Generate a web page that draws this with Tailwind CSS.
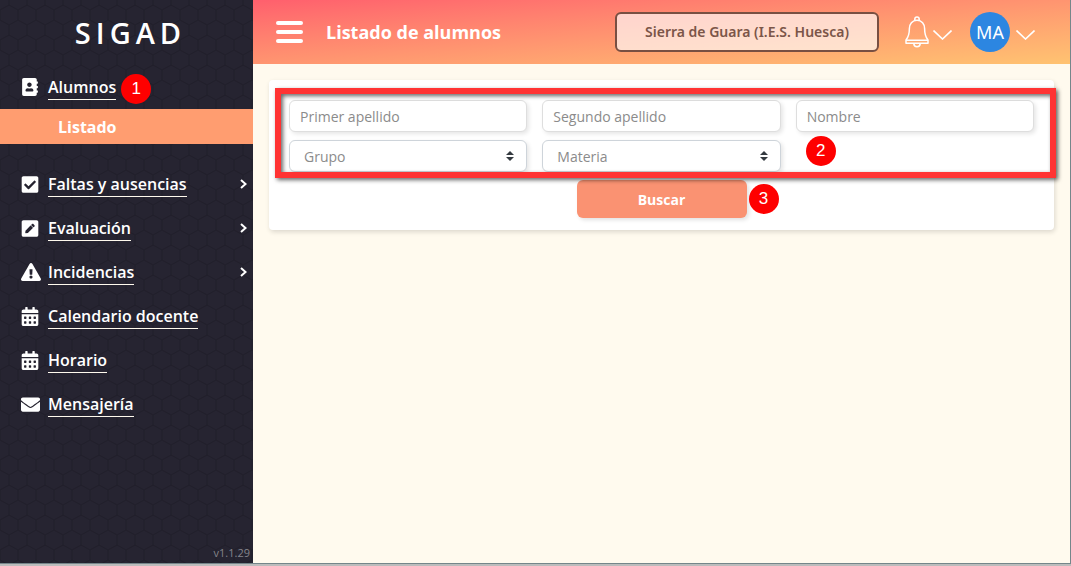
<!DOCTYPE html>
<html lang="es">
<head>
<meta charset="utf-8">
<meta name="viewport" content="width=device-width, initial-scale=1">
<title>SIGAD - Listado de alumnos</title>
<script src="https://cdn.jsdelivr.net/npm/@tailwindcss/browser@4"></script>
</head>
<body class="flex h-screen flex-col overflow-hidden bg-[#bcbcbc] font-['Open_Sans','Noto_Sans',sans-serif]">
<div class="mb-[2px] flex min-h-0 flex-1 border-b border-[#75868a]">

  <aside class="relative isolate flex w-[253px] shrink-0 flex-col bg-[#262431] text-white">
    <svg class="absolute inset-0 -z-10 size-full" aria-hidden="true">
      <defs>
        <pattern id="hex" width="18" height="30" patternUnits="userSpaceOnUse">
          <path d="M9 0v5L0 10v10l9 5v5M9 5l9 5v10l-9 5" fill="none" stroke="#211f2b" stroke-width="1.3"/>
        </pattern>
      </defs>
      <rect width="100%" height="100%" fill="url(#hex)"/>
    </svg>
    <h1 class="flex h-[65px] items-center justify-center pl-2 text-[29px] font-semibold tracking-[5px]">SIGAD</h1>
    <nav class="flex flex-col text-base font-semibold">
      <div class="flex h-11 items-center pl-[21px]">
        <svg class="h-[18px] w-[27px] shrink-0 pr-[9px]" viewBox="0 0 448 512" fill="currentColor" aria-hidden="true"><path d="M436 160c6.600 0 12-5.400 12-12v-40c0-6.600-5.400-12-12-12h-20V48c0-26.500-21.500-48-48-48H48C21.500 0 0 21.500 0 48v416c0 26.500 21.500 48 48 48h320c26.500 0 48-21.500 48-48v-48h20c6.600 0 12-5.400 12-12v-40c0-6.600-5.400-12-12-12h-20v-64h20c6.600 0 12-5.400 12-12v-40c0-6.600-5.400-12-12-12h-20v-64h20zm-228-32c35.300 0 64 28.700 64 64s-28.700 64-64 64-64-28.700-64-64 28.700-64 64-64zm112 236.800c0 10.600-10 19.200-22.400 19.200H118.400C106 384 96 375.400 96 364.800v-19.200c0-31.800 30.100-57.600 67.200-57.600h5c12.300 5.100 25.700 8 39.800 8s27.600-2.900 39.800-8h5c37.100 0 67.200 25.800 67.200 57.600v19.200z"/></svg>
        <a href="#alumnos" class="border-b border-[#fffaee]">Alumnos</a>
        <span class="ml-[5px] mt-1 flex size-[30px] items-center justify-center rounded-full bg-[#fe0000] font-['Liberation_Sans',sans-serif] text-[17px] font-normal">1</span>
      </div>
      <a href="#listado" class="mb-[18px] flex h-[35px] items-center bg-[#ff9d70] pl-[58px] font-bold">Listado</a>
      <div class="flex h-11 items-center pl-[21px] pr-[6px]">
        <svg class="h-[19px] w-[27px] shrink-0 pr-[9px]" viewBox="0 0 448 512" fill="currentColor" aria-hidden="true"><path d="M400 480H48c-26.500 0-48-21.500-48-48V80c0-26.500 21.500-48 48-48h352c26.500 0 48 21.500 48 48v352c0 26.500-21.500 48-48 48zm-204.700-98.100 184-184c6.200-6.200 6.200-16.400 0-22.600l-22.600-22.600c-6.200-6.200-16.400-6.200-22.600 0L184 302.700l-70.100-70.100c-6.200-6.200-16.400-6.200-22.600 0l-22.600 22.600c-6.200 6.200-6.200 16.400 0 22.600l104 104c6.200 6.300 16.400 6.300 22.600.1z"/></svg>
        <a href="#faltas" class="border-b border-[#fffaee]">Faltas y ausencias</a>
        <svg class="ml-auto h-[10px] w-[7px]" viewBox="0 0 7 10" fill="none" stroke="currentColor" stroke-width="2" aria-hidden="true"><path d="M1 1l4.500 4L1 9"/></svg>
      </div>
      <div class="flex h-11 items-center pl-[21px] pr-[6px]">
        <svg class="h-[19px] w-[27px] shrink-0 pr-[9px]" viewBox="0 0 448 512" fill="currentColor" aria-hidden="true"><path d="M400 480H48c-26.500 0-48-21.500-48-48V80c0-26.500 21.500-48 48-48h352c26.500 0 48 21.500 48 48v352c0 26.500-21.500 48-48 48zM238.100 177.900 102.400 313.600l-6.300 57.100c-.8 7.600 5.600 14.100 13.300 13.300l57.100-6.300L302.200 242c2.300-2.300 2.300-6.100 0-8.500L246.700 178c-2.500-2.400-6.300-2.400-8.600-.1zM345 165.100 314.900 135c-9.400-9.400-24.600-9.400-33.900 0l-23.100 23.100c-2.300 2.300-2.300 6.100 0 8.500l55.500 55.500c2.300 2.300 6.100 2.300 8.500 0L345 199c9.300-9.300 9.300-24.500 0-33.900z"/></svg>
        <a href="#evaluacion" class="border-b border-[#fffaee]">Evaluación</a>
        <svg class="ml-auto h-[10px] w-[7px]" viewBox="0 0 7 10" fill="none" stroke="currentColor" stroke-width="2" aria-hidden="true"><path d="M1 1l4.500 4L1 9"/></svg>
      </div>
      <div class="flex h-11 items-center pl-[21px] pr-[6px]">
        <svg class="h-[18px] w-[27px] shrink-0 pr-[7px]" viewBox="0 0 576 512" fill="currentColor" aria-hidden="true"><path d="M569.500 440c18.500 32-4.700 72-41.600 72H48.100c-36.900 0-60-40.100-41.600-72L246.400 24c18.500-32 64.700-32 83.200 0l239.900 416zM288 354c-25.400 0-46 20.600-46 46s20.600 46 46 46 46-20.600 46-46-20.600-46-46-46zm-43.700-165.300 7.400 136c.3 6.400 5.600 11.300 12 11.300h48.500c6.400 0 11.600-5 12-11.300l7.400-136c.4-6.900-5.100-12.700-12-12.700h-63.400c-6.900 0-12.300 5.800-11.900 12.700z"/></svg>
        <a href="#incidencias" class="border-b border-[#fffaee]">Incidencias</a>
        <svg class="ml-auto h-[10px] w-[7px]" viewBox="0 0 7 10" fill="none" stroke="currentColor" stroke-width="2" aria-hidden="true"><path d="M1 1l4.500 4L1 9"/></svg>
      </div>
      <div class="flex h-11 items-center pl-[21px]">
        <svg class="h-[19px] w-[27px] shrink-0 pr-[9px]" viewBox="0 0 448 512" fill="currentColor" aria-hidden="true"><path d="M0 464c0 26.500 21.500 48 48 48h352c26.500 0 48-21.500 48-48V192H0v272zm320-196c0-6.600 5.400-12 12-12h40c6.600 0 12 5.400 12 12v40c0 6.600-5.400 12-12 12h-40c-6.600 0-12-5.400-12-12v-40zm0 128c0-6.600 5.400-12 12-12h40c6.600 0 12 5.400 12 12v40c0 6.600-5.400 12-12 12h-40c-6.600 0-12-5.400-12-12v-40zM192 268c0-6.600 5.400-12 12-12h40c6.600 0 12 5.400 12 12v40c0 6.600-5.400 12-12 12h-40c-6.600 0-12-5.400-12-12v-40zm0 128c0-6.600 5.400-12 12-12h40c6.600 0 12 5.400 12 12v40c0 6.600-5.400 12-12 12h-40c-6.600 0-12-5.400-12-12v-40zM64 268c0-6.600 5.400-12 12-12h40c6.600 0 12 5.400 12 12v40c0 6.600-5.400 12-12 12H76c-6.600 0-12-5.400-12-12v-40zm0 128c0-6.600 5.400-12 12-12h40c6.600 0 12 5.400 12 12v40c0 6.600-5.400 12-12 12H76c-6.600 0-12-5.400-12-12v-40zM400 64h-48V16c0-8.800-7.200-16-16-16h-32c-8.800 0-16 7.200-16 16v48H160V16c0-8.800-7.200-16-16-16h-32c-8.800 0-16 7.200-16 16v48H48C21.500 64 0 85.500 0 112v48h448v-48c0-26.500-21.500-48-48-48z"/></svg>
        <a href="#calendario" class="border-b border-[#fffaee]">Calendario docente</a>
      </div>
      <div class="flex h-11 items-center pl-[21px]">
        <svg class="h-[19px] w-[27px] shrink-0 pr-[9px]" viewBox="0 0 448 512" fill="currentColor" aria-hidden="true"><path d="M0 464c0 26.500 21.500 48 48 48h352c26.500 0 48-21.500 48-48V192H0v272zm320-196c0-6.600 5.400-12 12-12h40c6.600 0 12 5.400 12 12v40c0 6.600-5.400 12-12 12h-40c-6.600 0-12-5.400-12-12v-40zm0 128c0-6.600 5.400-12 12-12h40c6.600 0 12 5.400 12 12v40c0 6.600-5.400 12-12 12h-40c-6.600 0-12-5.400-12-12v-40zM192 268c0-6.600 5.400-12 12-12h40c6.600 0 12 5.400 12 12v40c0 6.600-5.400 12-12 12h-40c-6.600 0-12-5.400-12-12v-40zm0 128c0-6.600 5.400-12 12-12h40c6.600 0 12 5.400 12 12v40c0 6.600-5.400 12-12 12h-40c-6.600 0-12-5.400-12-12v-40zM64 268c0-6.600 5.400-12 12-12h40c6.600 0 12 5.400 12 12v40c0 6.600-5.400 12-12 12H76c-6.600 0-12-5.400-12-12v-40zm0 128c0-6.600 5.400-12 12-12h40c6.600 0 12 5.400 12 12v40c0 6.600-5.400 12-12 12H76c-6.600 0-12-5.400-12-12v-40zM400 64h-48V16c0-8.800-7.200-16-16-16h-32c-8.800 0-16 7.200-16 16v48H160V16c0-8.800-7.200-16-16-16h-32c-8.800 0-16 7.200-16 16v48H48C21.500 64 0 85.500 0 112v48h448v-48c0-26.500-21.500-48-48-48z"/></svg>
        <a href="#horario" class="border-b border-[#fffaee]">Horario</a>
      </div>
      <div class="flex h-11 items-center pl-[21px]">
        <svg class="h-[19px] w-[27px] shrink-0 pr-2" viewBox="0 0 512 512" fill="currentColor" aria-hidden="true"><path d="M502.300 190.800c3.900-3.100 9.700-.2 9.700 4.700V400c0 26.500-21.500 48-48 48H48c-26.500 0-48-21.500-48-48V195.600c0-5 5.700-7.800 9.700-4.700 22.400 17.400 52.100 39.500 154.100 113.600 21.100 15.400 56.700 47.800 92.200 47.600 35.700.3 72-32.800 92.300-47.600 102-74.100 131.600-96.300 154-113.700zM256 320c23.200.4 56.600-29.200 73.400-41.400 132.700-96.300 142.800-104.700 173.400-128.700 5.800-4.500 9.200-11.500 9.200-18.900v-19c0-26.500-21.500-48-48-48H48C21.500 64 0 85.500 0 112v19c0 7.400 3.400 14.300 9.200 18.900 30.600 23.900 40.700 32.400 173.400 128.700 16.800 12.200 50.200 41.800 73.400 41.400z"/></svg>
        <a href="#mensajeria" class="border-b border-[#fffaee]">Mensajería</a>
      </div>
    </nav>
    <p class="mt-auto pb-[2px] pr-[3px] text-right text-[11px] text-[#85858c]">v1.1.29</p>
  </aside>

  <div class="flex min-w-0 flex-1 flex-col border-r border-[#75868a] bg-[#fffaee]">
    <header class="flex h-16 shrink-0 items-center bg-linear-to-br from-[#ff5f6d] to-[#ffc371] pl-[23px] pr-[35px] text-white">
      <button type="button" aria-label="Menú" class="flex w-[27px] flex-col gap-[5px]">
        <span class="h-1 w-full rounded-full bg-white"></span>
        <span class="h-1 w-full rounded-full bg-white"></span>
        <span class="h-1 w-full rounded-full bg-white"></span>
      </button>
      <h2 class="ml-[23px] text-lg font-bold">Listado de alumnos</h2>
      <button type="button" class="ml-auto h-10 w-[264px] rounded-md border-2 border-[#784f42] bg-white/65 font-['Noto_Sans','Open_Sans',sans-serif] text-sm font-semibold text-[#7b5548]">Sierra de Guara (I.E.S. Huesca)</button>
      <button type="button" aria-label="Notificaciones" class="ml-[26px] flex items-center gap-1">
        <svg class="h-8 w-6" viewBox="0 0 24 32" fill="none" stroke="currentColor" stroke-width="1.500" stroke-linejoin="round" aria-hidden="true"><path d="M9.800 4.600V3.200a2.200 2.200 0 0 1 4.400 0v1.400M12 4.300c-4.800 0-7.600 3.600-7.600 8.200 0 6-1 8.700-3.400 11.500v3.200h22V24c-2.400-2.800-3.400-5.500-3.400-11.500 0-4.600-2.800-8.200-7.600-8.200zM1 24.300h22M8.800 27.500a3.200 3.200 0 0 0 6.400 0"/></svg>
        <svg class="mt-[6px] h-[10px] w-[19px]" viewBox="0 0 19 10" fill="none" stroke="currentColor" stroke-width="1.600" aria-hidden="true"><path d="M.5.500l9 8.500 9-8.500"/></svg>
      </button>
      <button type="button" aria-label="Cuenta MA" class="ml-[18px] flex items-center gap-[6px]">
        <span class="flex size-10 items-center justify-center rounded-full bg-[#2c86e1] font-['Noto_Sans','Open_Sans',sans-serif] text-lg">MA</span>
        <svg class="mt-[6px] h-[10px] w-[19px]" viewBox="0 0 19 10" fill="none" stroke="currentColor" stroke-width="1.600" aria-hidden="true"><path d="M.5.500l9 8.500 9-8.500"/></svg>
      </button>
    </header>

    <main class="p-4">
      <form class="relative rounded-sm bg-white px-5 pb-3 pt-5 text-sm shadow-[1px_2px_5px_rgba(0,0,0,0.14)]" onsubmit="return false">
        <div class="grid grid-cols-3 gap-x-[15px] gap-y-2">
          <input type="text" aria-label="Primer apellido" placeholder="Primer apellido" class="h-8 min-w-0 rounded-md border border-[#dedede] bg-white px-[10px] shadow-[2px_2px_4px_rgba(0,0,0,0.1)] placeholder:text-[#8b8b8b]">
          <input type="text" aria-label="Segundo apellido" placeholder="Segundo apellido" class="h-8 min-w-0 rounded-md border border-[#dedede] bg-white px-[10px] shadow-[2px_2px_4px_rgba(0,0,0,0.1)] placeholder:text-[#8b8b8b]">
          <input type="text" aria-label="Nombre" placeholder="Nombre" class="h-8 min-w-0 rounded-md border border-[#dedede] bg-white px-[10px] shadow-[2px_2px_4px_rgba(0,0,0,0.1)] placeholder:text-[#8b8b8b]">
          <div class="grid items-center">
            <select aria-label="Grupo" class="col-start-1 row-start-1 h-8 w-full appearance-none rounded-md border border-[#ced4da] bg-white px-[14px] pt-[2px] text-[#8b8b8b] shadow-[2px_2px_4px_rgba(0,0,0,0.1)]"><option>Grupo</option></select>
            <svg class="pointer-events-none col-start-1 row-start-1 mr-[13px] h-[10px] w-2 justify-self-end" viewBox="0 0 4 5" fill="#343a40" aria-hidden="true"><path d="M2 0L0 2h4zm0 5L0 3h4z"/></svg>
          </div>
          <div class="grid items-center">
            <select aria-label="Materia" class="col-start-1 row-start-1 h-8 w-full appearance-none rounded-md border border-[#ced4da] bg-white px-[14px] pt-[2px] text-[#8b8b8b] shadow-[2px_2px_4px_rgba(0,0,0,0.1)]"><option>Materia</option></select>
            <svg class="pointer-events-none col-start-1 row-start-1 mr-[13px] h-[10px] w-2 justify-self-end" viewBox="0 0 4 5" fill="#343a40" aria-hidden="true"><path d="M2 0L0 2h4zm0 5L0 3h4z"/></svg>
          </div>
          <span class="-mt-1 ml-[10px] flex size-[30px] items-center justify-center self-start rounded-full bg-[#fe0000] font-['Liberation_Sans',sans-serif] text-[17px] text-white">2</span>
        </div>
        <div class="mt-2 flex justify-center">
          <button type="submit" class="h-[38px] w-[170px] rounded-md bg-[#fa9272] pt-[2px] font-bold text-white shadow-[2px_2px_4px_rgba(0,0,0,0.12)]">Buscar</button>
          <span class="-mr-8 ml-[2px] flex size-[30px] items-center justify-center self-center rounded-full bg-[#fe0000] font-['Liberation_Sans',sans-serif] text-[17px] text-white">3</span>
        </div>
        <div class="pointer-events-none absolute -right-[2px] left-[6px] top-2 h-[90px] border-[6px] border-[#ff3333] drop-shadow-[2px_2px_2px_rgba(0,0,0,0.6)]"></div>
      </form>
    </main>
  </div>
</div>
</body>
</html>
